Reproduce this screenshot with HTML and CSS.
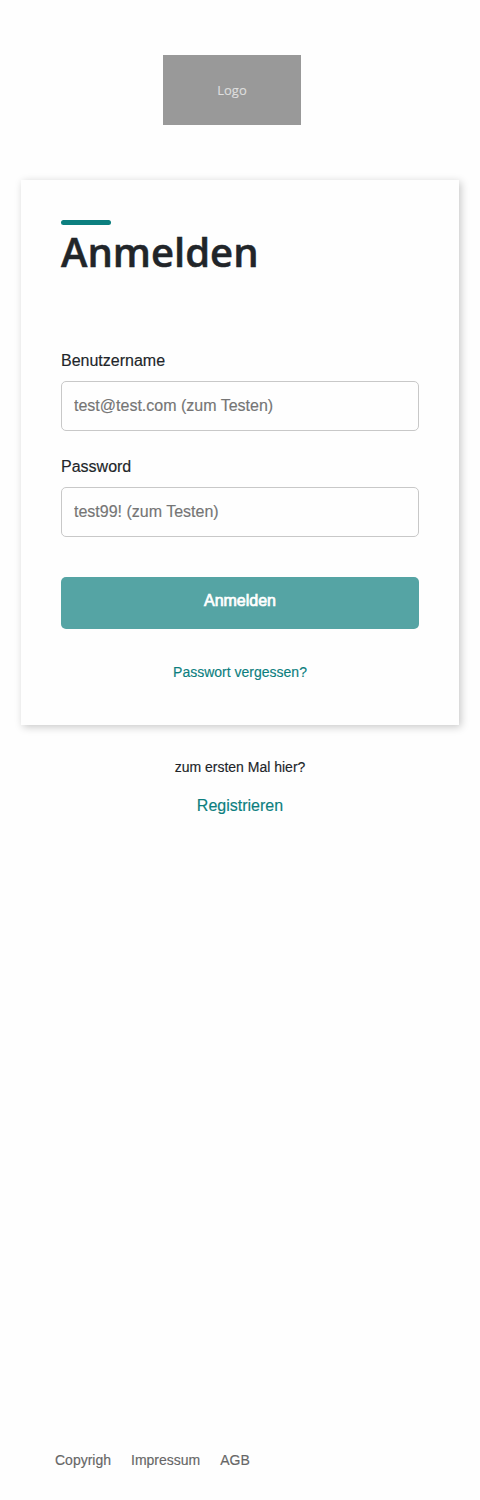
FILE: index.html
```html
<!DOCTYPE html>
<html lang="de">
<head>
<meta charset="utf-8">
<title>Anmelden</title>
<link rel="stylesheet" href="styles.css">
</head>
<body>
<header class="header"><div class="logo">Logo</div></header>
<main class="main">
<form class="card">
<h1 class="title">Anmelden</h1>
<label class="label" for="user">Benutzername</label>
<input class="input" id="user" type="text" placeholder="test@test.com (zum Testen)">
<label class="label" for="pass">Password</label>
<input class="input" id="pass" type="password" placeholder="test99! (zum Testen)">
<button class="submit" type="button">Anmelden</button>
<a class="forgot">Passwort vergessen?</a>
</form>
<p class="hint">zum ersten Mal hier?</p>
<a class="register">Registrieren</a>
</main>
<footer class="footer"><a>Copyrigh</a><a>Impressum</a><a>AGB</a></footer>
</body>
</html>
```
FILE: styles.css
```css
* { box-sizing: border-box; }
body {
  margin: 0;
  min-height: 1500px;
  display: flex;
  flex-direction: column;
  background: #fefefe;
  color: #212529;
  font: 16px/24px "Liberation Sans", Arial, sans-serif;
  -webkit-text-stroke: .15px;
}
.header { padding: 55px 0 0 163px; height: 180px; }
.logo {
  width: 138px;
  height: 70px;
  background: #999;
  color: #dedede;
  font: 13px/71px "Open Sans", sans-serif;
  text-align: center;
}
.main { flex: 1; display: flex; flex-direction: column; align-items: center; }
.card {
  width: 438px;
  height: 545px;
  padding: 40px;
  display: flex;
  flex-direction: column;
  background: #fefefe;
  box-shadow: 2px 2px 8px rgba(0, 0, 0, .22);
}
.title {
  margin: 0 0 69px;
  font: 600 40px/54px "Open Sans", sans-serif;
  height: 60px;
  -webkit-text-stroke: .5px;
}
.title::before {
  content: "";
  display: block;
  width: 50px;
  height: 5px;
  border-radius: 3px;
  background: #0c7f7f;
}
.label { margin-bottom: 8px; }
.input {
  width: 100%;
  height: 50px;
  margin: 0 0 24px;
  padding: 0 12px;
  border: 1px solid #c8c8c8;
  border-radius: 5px;
  background: #fefefe;
  font: inherit;
}
.input::placeholder { color: #757575; }
.submit {
  height: 52px;
  margin: 16px 0 31px;
  padding: 0 0 4px;
  border: 0;
  border-radius: 5px;
  background: #55a4a4;
  color: #fff;
  font: 16px/24px "Liberation Sans", Arial, sans-serif;
  -webkit-text-stroke: .7px;
}
.forgot { color: #0c7f7f; font-size: 14px; text-align: center; }
.hint { margin: 30px 0 15px; font-size: 14px; }
.register { color: #0c7f7f; }
.footer {
  display: flex;
  gap: 20px;
  padding: 0 55px 28px;
  color: #666;
  font-size: 14px;
}
```
